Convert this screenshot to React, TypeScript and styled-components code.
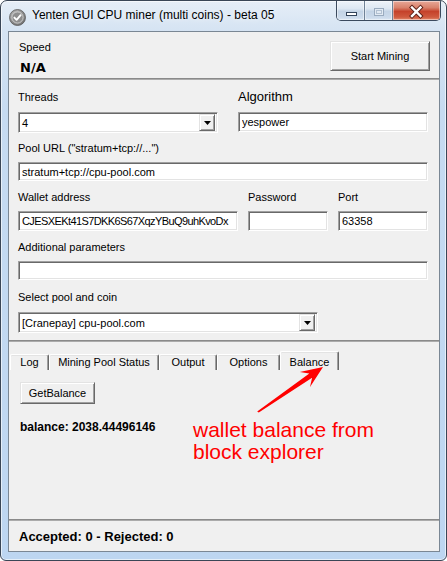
import React from "react";
import styled, { createGlobalStyle } from "styled-components";

const Global = createGlobalStyle`
  html, body { margin: 0; padding: 0; background: #ffffff; }
  body { font-family: "Liberation Sans", Arial, sans-serif; color: #000; }
  #root { width: 447px; height: 561px; }
`;

const Window = styled.div`
  box-sizing: border-box;
  width: 447px;
  height: 561px;
  border: 1px solid #3a4656;
  border-radius: 7px 7px 6px 6px;
  background: linear-gradient(180deg, #e6eef7 0px, #d6e4f3 28px, #c6dbf1 110px, #bdd6f1 100%);
  box-shadow: inset 0 0 0 1px rgba(255, 255, 255, 0.6);
  padding: 0 6px 8px 7px;
  display: flex;
  flex-direction: column;
  overflow: hidden;
`;

const TitleBar = styled.div`
  height: 30px;
  display: flex;
  align-items: flex-start;
  flex-shrink: 0;
`;

const AppIcon = styled.svg`
  margin: 8px 6px 0 1px;
  flex-shrink: 0;
`;

const Title = styled.div`
  font-size: 12px;
  line-height: 15px;
  margin-top: 7px;
  color: #000;
  white-space: nowrap;
  text-shadow: 0 0 6px rgba(255, 255, 255, 0.9);
`;

const CaptionGroup = styled.div`
  margin-left: auto;
  margin-right: -1px;
  display: flex;
  height: 19px;
  border: 1px solid #3b4a5e;
  border-top: none;
  border-radius: 0 0 5px 5px;
  overflow: hidden;
`;

const CapBtn = styled.div<{ $w: number; $close?: boolean }>`
  width: ${(p) => p.$w}px;
  height: 19px;
  display: flex;
  align-items: center;
  justify-content: center;
  border-left: ${(p) => (p.$close ? "1px solid #3b4a5e" : "none")};
  & + & { border-left: 1px solid #6f8196; }
  background: ${(p) =>
    p.$close
      ? "linear-gradient(180deg, #e8a898 0%, #d9826c 35%, #c5422b 55%, #cf5a3f 85%, #e38b6e 100%)"
      : "linear-gradient(180deg, #eef3f9 0%, #dde7f2 40%, #c4d4e6 55%, #cbdaeb 85%, #dbe6f2 100%)"};
  box-shadow: inset 0 0 0 1px rgba(255, 255, 255, 0.45);
`;

const Client = styled.div`
  flex: 1;
  display: flex;
  flex-direction: column;
  border: 1px solid #7a8794;
  background: #f0f0f0;
  min-height: 0;
`;

const SpeedPanel = styled.div`
  box-sizing: border-box;
  height: 46px;
  padding: 8px 9px 0 10px;
  display: flex;
  justify-content: space-between;
  align-items: flex-start;
  flex-shrink: 0;
`;

const Stack = styled.div`
  display: flex;
  flex-direction: column;
`;

const Label = styled.div<{ $big?: boolean }>`
  font-size: ${(p) => (p.$big ? 13 : 11)}px;
  line-height: 14px;
  height: 14px;
  white-space: nowrap;
`;

const SpeedValue = styled.div`
  font-family: "DejaVu Sans", Verdana, sans-serif;
  font-weight: bold;
  font-size: 13px;
  line-height: 16px;
  margin-top: 6px;
  padding-left: 1px;
`;

const RaisedButton = styled.div<{ $w: number; $h: number }>`
  box-sizing: border-box;
  width: ${(p) => p.$w}px;
  height: ${(p) => p.$h}px;
  display: flex;
  align-items: center;
  justify-content: center;
  font-size: 11px;
  background: #f0f0f0;
  border: 1px solid;
  border-color: #e3e3e3 #696969 #696969 #e3e3e3;
  box-shadow: inset 1px 1px 0 #ffffff, inset -1px -1px 0 #a0a0a0;
  white-space: nowrap;
`;

const StartButton = styled(RaisedButton)`
  margin-top: 1px;
`;

const Divider = styled.div`
  height: 2px;
  box-sizing: border-box;
  border-top: 1px solid #8a8a8a;
  border-bottom: 1px solid #ababab;
  flex-shrink: 0;
`;

const FormPanel = styled.div`
  box-sizing: border-box;
  height: 260px;
  padding: 10px 10px 0 9px;
  display: flex;
  flex-direction: column;
  flex-shrink: 0;
`;

const Row = styled.div<{ $cols: string; $gap: number; $top: number }>`
  display: grid;
  grid-template-columns: ${(p) => p.$cols};
  column-gap: ${(p) => p.$gap}px;
  margin-top: ${(p) => p.$top}px;
`;

const Field = styled.div<{ $gap: number }>`
  display: flex;
  flex-direction: column;
  gap: ${(p) => p.$gap}px;
`;

const sunken = `
  box-sizing: border-box;
  border: 1px solid;
  border-color: #a0a0a0 #ffffff #ffffff #a0a0a0;
  box-shadow: inset 1px 1px 0 #696969, inset -1px -1px 0 #e3e3e3;
  background: #ffffff;
`;

const TextBox = styled.input<{ $h: number; $tight?: boolean }>`
  ${sunken}
  width: 100%;
  height: ${(p) => p.$h}px;
  margin: 0;
  padding: 0 0 0 3px;
  font-family: "Liberation Sans", Arial, sans-serif;
  font-size: 11px;
  letter-spacing: ${(p) => (p.$tight ? "-0.6px" : "0")};
  color: #000;
  outline: none;
`;

const Select = styled.div<{ $w?: number }>`
  ${sunken}
  width: ${(p) => (p.$w ? `${p.$w}px` : "100%")};
  height: 21px;
  display: flex;
  align-items: center;
  padding: 2px 2px 2px 3px;
  font-size: 11px;
`;

const SelectText = styled.span`
  flex: 1;
  white-space: nowrap;
`;

const DropButton = styled.div`
  box-sizing: border-box;
  width: 16px;
  height: 17px;
  display: flex;
  align-items: center;
  justify-content: center;
  background: #f0f0f0;
  border: 1px solid;
  border-color: #e3e3e3 #696969 #696969 #e3e3e3;
  box-shadow: inset 1px 1px 0 #ffffff, inset -1px -1px 0 #a0a0a0;
`;

const TabsArea = styled.div`
  flex: 1;
  display: flex;
  flex-direction: column;
  min-height: 0;
`;

const TabStrip = styled.div`
  display: flex;
  align-items: flex-end;
  height: 19px;
  padding: 9px 0 0 1px;
  flex-shrink: 0;
`;

const Tab = styled.div<{ $w: number; $active?: boolean }>`
  box-sizing: border-box;
  width: ${(p) => p.$w}px;
  height: ${(p) => (p.$active ? 19 : 16)}px;
  display: flex;
  align-items: flex-end;
  justify-content: center;
  padding-bottom: 1px;
  font-size: 11px;
  line-height: 14px;
  white-space: nowrap;
  background: #f0f0f0;
  border-top: 1px solid #ffffff;
  border-left: 1px solid #ffffff;
  border-right: 1px solid #696969;
  border-radius: 2px 2px 0 0;
  box-shadow: inset -1px 0 0 #a0a0a0, inset 0 1px 0 #e3e3e3;
`;

const TabBody = styled.div`
  position: relative;
  flex: 1;
  padding: 12px 0 0 11px;
  display: flex;
  flex-direction: column;
  align-items: flex-start;
`;

const BalanceText = styled.div`
  font-weight: bold;
  font-size: 12px;
  line-height: 15px;
  margin-top: 16px;
`;

const Note = styled.div`
  position: absolute;
  left: 184px;
  top: 49px;
  color: #ff0000;
  font-size: 21px;
  line-height: 22px;
  white-space: nowrap;
`;

const Arrow = styled.svg`
  position: absolute;
  left: 240px;
  top: -8px;
  z-index: 2;
  overflow: visible;
`;

const StatusBar = styled.div`
  height: 30px;
  box-sizing: border-box;
  padding: 8px 0 0 10px;
  font-weight: bold;
  font-size: 13px;
  line-height: 16px;
  flex-shrink: 0;
`;

const DownTriangle = () => (
  <svg width="7" height="4" viewBox="0 0 7 4">
    <path d="M0 0 H7 L3.5 4 Z" fill="#000" />
  </svg>
);

const tabs = [
  { label: "Log", w: 39 },
  { label: "Mining Pool Status", w: 110 },
  { label: "Output", w: 58 },
  { label: "Options", w: 63 },
  { label: "Balance", w: 59, active: true },
];

export default function App() {
  return (
    <>
      <Global />
      <Window>
        <TitleBar>
          <AppIcon width="17" height="17" viewBox="0 0 17 17">
            <defs>
              <radialGradient id="ig" cx="40%" cy="35%" r="70%">
                <stop offset="0%" stopColor="#c9c9c9" />
                <stop offset="100%" stopColor="#6d6d6d" />
              </radialGradient>
            </defs>
            <circle cx="8.5" cy="8.5" r="8" fill="url(#ig)" stroke="#5a5a5a" strokeWidth="0.8" />
            <circle cx="8.5" cy="8.5" r="5.6" fill="#8e8e8e" stroke="#d0d0d0" strokeWidth="0.9" />
            <path d="M5.4 8.6 L7.6 10.8 L11.6 6.2" stroke="#ffffff" strokeWidth="1.9" fill="none" strokeLinecap="round" strokeLinejoin="round" />
          </AppIcon>
          <Title>Yenten GUI CPU miner (multi coins) - beta 05</Title>
          <CaptionGroup>
            <CapBtn $w={27}>
              <svg width="27" height="19" viewBox="0 0 27 19">
                <rect x="9.5" y="11.5" width="10" height="3" fill="#ffffff" stroke="#33445a" />
              </svg>
            </CapBtn>
            <CapBtn $w={27}>
              <svg width="27" height="19" viewBox="0 0 27 19">
                <rect x="9.5" y="7.5" width="9" height="7" fill="#e2eaf3" stroke="#9aabbf" />
                <rect x="11.5" y="9.5" width="5" height="3" fill="none" stroke="#b2c1d2" />
              </svg>
            </CapBtn>
            <CapBtn $w={47} $close>
              <svg width="47" height="19" viewBox="0 0 47 19">
                <path d="M19 6.5 L27.5 15 M27.5 6.5 L19 15" stroke="#5b2118" strokeWidth="4.2" strokeLinecap="square" />
                <path d="M19 6.5 L27.5 15 M27.5 6.5 L19 15" stroke="#ffffff" strokeWidth="2.4" strokeLinecap="square" />
              </svg>
            </CapBtn>
          </CaptionGroup>
        </TitleBar>

        <Client>
          <SpeedPanel>
            <Stack>
              <Label>Speed</Label>
              <SpeedValue>N/A</SpeedValue>
            </Stack>
            <StartButton $w={100} $h={30}>Start Mining</StartButton>
          </SpeedPanel>
          <Divider />

          <FormPanel>
            <Row $cols="200px 190px" $gap={20} $top={0}>
              <Field $gap={8}>
                <Label>Threads</Label>
                <Select>
                  <SelectText>4</SelectText>
                  <DropButton><DownTriangle /></DropButton>
                </Select>
              </Field>
              <Field $gap={8}>
                <Label $big>Algorithm</Label>
                <TextBox $h={20} readOnly value="yespower" />
              </Field>
            </Row>
            <Row $cols="410px" $gap={0} $top={8}>
              <Field $gap={7}>
                <Label>Pool URL ("stratum+tcp://...")</Label>
                <TextBox $h={19} readOnly value="stratum+tcp://cpu-pool.com" />
              </Field>
            </Row>
            <Row $cols="220px 80px 90px" $gap={10} $top={9}>
              <Field $gap={7}>
                <Label>Wallet address</Label>
                <TextBox $h={20} $tight readOnly value="CJESXEKt41S7DKK6S67XqzYBuQ9uhKvoDx" />
              </Field>
              <Field $gap={7}>
                <Label>Password</Label>
                <TextBox $h={20} readOnly value="" />
              </Field>
              <Field $gap={7}>
                <Label>Port</Label>
                <TextBox $h={20} readOnly value="63358" />
              </Field>
            </Row>
            <Row $cols="410px" $gap={0} $top={9}>
              <Field $gap={7}>
                <Label>Additional parameters</Label>
                <TextBox $h={19} readOnly value="" />
              </Field>
            </Row>
            <Row $cols="410px" $gap={0} $top={10}>
              <Field $gap={8}>
                <Label>Select pool and coin</Label>
                <Select $w={300}>
                  <SelectText>[Cranepay] cpu-pool.com</SelectText>
                  <DropButton><DownTriangle /></DropButton>
                </Select>
              </Field>
            </Row>
          </FormPanel>
          <Divider />

          <TabsArea>
            <TabStrip>
              {tabs.map((t) => (
                <Tab key={t.label} $w={t.w} $active={t.active}>{t.label}</Tab>
              ))}
            </TabStrip>
            <TabBody>
              <RaisedButton $w={75} $h={22}>GetBalance</RaisedButton>
              <BalanceText>balance: 2038.44496146</BalanceText>
              <Note>
                wallet balance from
                <br />
                block explorer
              </Note>
              <Arrow width="80" height="56" viewBox="0 0 80 56">
                <polygon
                  points="9.8,50.6 63.1,15.7 61.0,24.9 74,5 50.8,10.1 60.3,11.5 8.2,49.4"
                  fill="#ff0000"
                />
              </Arrow>
            </TabBody>
          </TabsArea>
          <Divider />
          <StatusBar>Accepted: 0 - Rejected: 0</StatusBar>
        </Client>
      </Window>
    </>
  );
}
